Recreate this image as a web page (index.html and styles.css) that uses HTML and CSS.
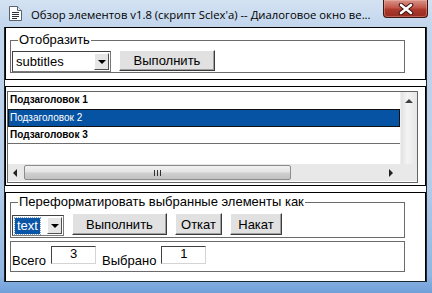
FILE: index.html
```html
<!DOCTYPE html>
<html lang="ru">
<head>
    <meta charset="UTF-8">
    <title>Обзор элементов</title>
    <link rel="stylesheet" href="styles.css">
</head>
<body>
    <div class="window">
        <div class="titlebar">
            <svg class="app-icon" width="13" height="15" viewBox="0 0 13 15">
                <path d="M0.5 0.5 H8.5 L12.5 4.5 V14.5 H0.5 Z" fill="#ffffff" stroke="#5a6470"/>
                <path d="M8.5 0.5 V4.5 H12.5" fill="#e4e8ee" stroke="#5a6470"/>
                <path d="M3 6.5 H10 M3 8.5 H10 M3 10.5 H10 M3 12.5 H8" stroke="#2c3440"/>
            </svg>
            <span class="title">Обзор элементов v1.8 (скрипт Sclex'a) -- Диалоговое окно ве...</span>
            <div class="close-btn">
                <svg width="16" height="12" viewBox="0 0 16 12">
                    <path d="M3 2 L13 10 M13 2 L3 10" stroke="#3a1410" stroke-width="4.5" stroke-linecap="round"/>
                    <path d="M3 2 L13 10 M13 2 L3 10" stroke="#ffffff" stroke-width="2.6" stroke-linecap="round"/>
                </svg>
            </div>
        </div>
        <div class="client">
            <div class="panel panel-show">
                <fieldset class="group group-show">
                    <legend>Отобразить</legend>
                    <div class="control-row">
                        <div class="combo combo-type">
                            <span class="combo-text">subtitles</span>
                            <span class="combo-arrow"></span>
                        </div>
                        <button class="btn btn-run">Выполнить</button>
                    </div>
                </fieldset>
            </div>

            <div class="panel panel-list">
                <div class="listbox">
                    <div class="list-main">
                        <div class="list-items">
                            <div class="item">Подзаголовок 1</div>
                            <div class="item selected">Подзаголовок 2</div>
                            <div class="item">Подзаголовок 3</div>
                        </div>
                        <div class="vscroll">
                            <span class="arrow-up"></span>
                        </div>
                    </div>
                    <div class="hscroll-row">
                        <div class="hscroll">
                            <span class="arrow-left"></span>
                            <div class="hthumb"><span class="grip"></span></div>
                            <span class="arrow-right"></span>
                        </div>
                        <div class="corner"></div>
                    </div>
                </div>
            </div>

            <div class="panel panel-format">
                <fieldset class="group group-format">
                    <legend>Переформатировать выбранные элементы как</legend>
                    <div class="control-row">
                        <div class="combo combo-format">
                            <span class="combo-text"><span class="sel-text">text</span></span>
                            <span class="combo-arrow"></span>
                        </div>
                        <button class="btn btn-run2">Выполнить</button>
                        <button class="btn btn-undo">Откат</button>
                        <button class="btn btn-redo">Накат</button>
                    </div>
                </fieldset>
                <div class="group group-count">
                    <span class="count-label">Всего</span>
                    <span class="count-box">3</span>
                    <span class="count-label">Выбрано</span>
                    <span class="count-box">1</span>
                </div>
            </div>
        </div>
    </div>
</body>
</html>
```

FILE: styles.css
```css
body {
    margin: 0;
    padding: 0;
    font-family: 'Liberation Sans', Arial, sans-serif;
    background-color: #ffffff;
}

.window {
    width: 432px;
    height: 293px;
    box-sizing: border-box;
    padding: 0 5px 11px 4px;
    display: flex;
    flex-direction: column;
    background: linear-gradient(to bottom, #d4e3f3 0, #c2d6ec 26px, #b7cee8 60%, #8fb5e2 94%, #6f9fd9 100%);
}

/* title bar */

.titlebar {
    height: 27px;
    display: flex;
    align-items: flex-start;
    flex-shrink: 0;
}

.app-icon {
    margin: 6px 0 0 5px;
    flex-shrink: 0;
}

.title {
    margin: 7px 0 0 9px;
    font-family: 'Open Sans', sans-serif;
    font-size: 11.3px;
    line-height: 15px;
    color: #000000;
    white-space: nowrap;
    flex: 1;
    overflow: hidden;
}

.close-btn {
    width: 45px;
    height: 18px;
    margin-right: -1px;
    box-sizing: border-box;
    border: 1px solid #3d1611;
    border-top: none;
    border-radius: 0 0 4px 4px;
    background: linear-gradient(to bottom, #d8958a 0, #c4564a 45%, #ad3a2d 55%, #982b20 100%);
    box-shadow: inset 0 0 0 1px rgba(255, 200, 190, 0.35);
    display: flex;
    align-items: center;
    justify-content: center;
    flex-shrink: 0;
}

/* client area */

.client {
    flex: 1;
    background-color: #ffffff;
    border: 1px solid #1c2630;
    border-top: none;
    display: flex;
    flex-direction: column;
    gap: 6px;
}

.panel {
    border: 1px solid #000000;
    box-sizing: border-box;
}

.panel-show {
    height: 53px;
}

.panel-list {
    height: 100px;
    padding: 4px 0 0 1px;
}

.panel-format {
    flex: 1;
    border-bottom: none;
}

/* group boxes */

.group {
    margin: 0 0 0 4px;
    width: 395px;
    box-sizing: border-box;
    border: 1px solid #6b6b6b;
    padding: 0 0 0 1px;
}

.group legend {
    margin-left: 6px;
    padding: 0 1px;
    font-size: 13px;
    line-height: 14px;
    color: #000000;
}

.group-show {
    margin-top: 5px;
    padding-top: 3px;
}

.group-format {
    margin-top: 2px;
    padding-top: 4px;
    padding-bottom: 2px;
}

.control-row {
    display: flex;
    align-items: flex-start;
    gap: 8px;
    height: 22px;
}

/* combo boxes */

.combo {
    height: 21px;
    margin-top: 1px;
    box-sizing: border-box;
    border: 1px solid #7a7a7a;
    border-top-color: #404040;
    border-left-color: #404040;
    background-color: #ffffff;
    display: flex;
    align-items: stretch;
    padding: 1px;
}

.combo-type {
    width: 99px;
}

.combo-format {
    width: 52px;
    margin-top: 2px;
}

.combo-text {
    flex: 1;
    font-size: 13px;
    line-height: 17px;
    padding-left: 2px;
    color: #000000;
}

.sel-text {
    background-color: #0a55a6;
    color: #ffffff;
    padding: 0 2px;
    margin-left: -1px;
    display: inline-block;
    line-height: 16px;
    outline: 1px dotted #7aa0d0;
}

.combo-arrow {
    width: 15px;
    box-sizing: border-box;
    background-color: #e6e6e6;
    border: 1px solid #ffffff;
    border-right-color: #505050;
    border-bottom-color: #505050;
    position: relative;
}

.combo-arrow::after {
    content: '';
    position: absolute;
    left: 3px;
    top: 6px;
    border-left: 4px solid transparent;
    border-right: 4px solid transparent;
    border-top: 4px solid #000000;
}

/* buttons */

.btn {
    height: 21px;
    box-sizing: border-box;
    padding: 0;
    font-family: 'Liberation Sans', Arial, sans-serif;
    font-size: 13px;
    line-height: 17px;
    color: #000000;
    background-color: #e1e1e1;
    border: 1px solid #ffffff;
    border-right-color: #3c3c3c;
    border-bottom-color: #3c3c3c;
    box-shadow: inset -1px -1px 0 #a0a0a0;
}

.btn-run {
    width: 96px;
}

.btn-run2 {
    width: 95px;
    height: 22px;
}

.btn-undo {
    width: 47px;
    height: 22px;
}

.btn-redo {
    width: 52px;
    height: 22px;
}

/* list box */

.listbox {
    width: 411px;
    height: 92px;
    box-sizing: border-box;
    border: 1px solid #646464;
    display: flex;
    flex-direction: column;
}

.list-main {
    height: 72px;
    display: flex;
}

.list-items {
    flex: 1;
}

.item {
    height: 17px;
    box-sizing: border-box;
    padding-left: 2px;
    font-size: 10px;
    font-weight: bold;
    line-height: 16px;
    color: #000000;
    border-bottom: 1px solid #6e6e6e;
}

.item:first-child {
    border-bottom: none;
}

.item.selected {
    height: 18px;
    font-weight: normal;
    color: #ffffff;
    background-color: #0653a3;
    border: 1px solid #111111;
    padding-left: 1px;
}

.vscroll {
    width: 17px;
    box-sizing: border-box;
    background: linear-gradient(to right, #e2e2e2, #f4f4f4 40%, #e6e6e6);
    border-left: 1px solid #f0f0f0;
    position: relative;
}

.arrow-up {
    position: absolute;
    left: 4px;
    top: 7px;
    border-left: 4px solid transparent;
    border-right: 4px solid transparent;
    border-bottom: 4px solid #404040;
}

.hscroll-row {
    height: 17px;
    display: flex;
}

.hscroll {
    flex: 1;
    display: flex;
    align-items: center;
    background-color: #e8e8e8;
}

.arrow-left {
    width: 0;
    margin: 0 7px 0 5px;
    border-top: 4px solid transparent;
    border-bottom: 4px solid transparent;
    border-right: 4px solid #202020;
}

.hthumb {
    width: 267px;
    height: 15px;
    box-sizing: border-box;
    border: 1px solid #8c8c8c;
    border-radius: 2px;
    background: linear-gradient(to bottom, #f2f2f2 0, #e4e4e4 45%, #cfcfcf 55%, #c2c2c2 100%);
    display: flex;
    align-items: center;
    justify-content: center;
}

.grip {
    width: 7px;
    height: 6px;
    background: repeating-linear-gradient(to right, #303030 0, #303030 1px, transparent 1px, transparent 3px);
}

.arrow-right {
    width: 0;
    margin-left: auto;
    margin-right: 7px;
    border-top: 4px solid transparent;
    border-bottom: 4px solid transparent;
    border-left: 4px solid #202020;
}

.corner {
    width: 17px;
    background-color: #e9e9e9;
}

/* counters */

.group-count {
    margin-top: 3px;
    height: 31px;
    display: flex;
    align-items: flex-start;
    padding-left: 1px;
}

.count-label {
    font-size: 13px;
    line-height: 15px;
    margin-top: 11px;
    color: #000000;
}

.count-box {
    width: 45px;
    height: 18px;
    margin: 4px 6px 0 5px;
    box-sizing: border-box;
    border: 1px solid #d4d4d4;
    border-top-color: #404040;
    border-left-color: #404040;
    font-size: 13px;
    line-height: 13px;
    text-align: center;
    color: #000000;
}
```
